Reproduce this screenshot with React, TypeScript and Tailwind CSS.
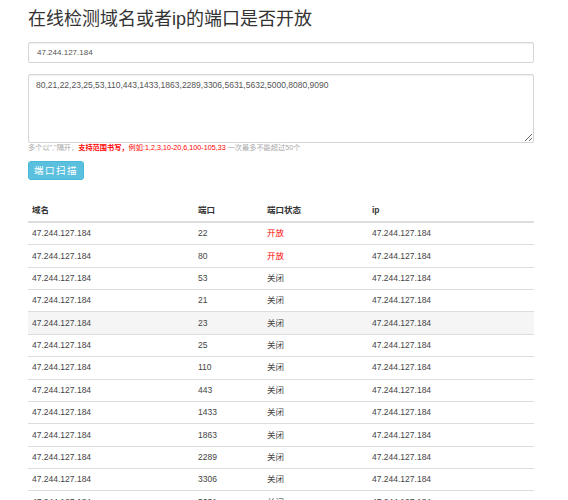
import React from "react";

const ports: { port: string; open: boolean }[] = [
  { port: "22", open: true },
  { port: "80", open: true },
  { port: "53", open: false },
  { port: "21", open: false },
  { port: "23", open: false },
  { port: "25", open: false },
  { port: "110", open: false },
  { port: "443", open: false },
  { port: "1433", open: false },
  { port: "1863", open: false },
  { port: "2289", open: false },
  { port: "3306", open: false },
  { port: "5631", open: false },
  { port: "5632", open: false },
  { port: "5000", open: false },
];

const font = { fontFamily: '"Liberation Sans", Arial, "Noto Sans CJK SC", sans-serif' };

export default function App() {
  return (
    <div className="min-h-[500px] bg-white text-[#333]" style={font}>
      <div className="w-[506px] ml-[28px]">
        <h1 className="pt-[9px] text-[18px] leading-[20px] font-normal text-[#333] whitespace-nowrap">
          在线检测域名或者ip的端口是否开放
        </h1>
        <input
          className="mt-[13px] block w-full h-[21px] border border-[#d6d6d6] rounded-[2px] px-[8px] text-[8px] text-[#555] outline-none shadow-[inset_0_1px_1px_rgba(0,0,0,0.06)]"
          defaultValue="47.244.127.184"
          style={font}
        />
        <textarea
          className="mt-[11px] block w-full h-[69px] border border-[#d6d6d6] rounded-[2px] px-[7px] py-[4px] text-[8.5px] leading-[12px] text-[#555] outline-none shadow-[inset_0_1px_1px_rgba(0,0,0,0.06)] resize-y"
          defaultValue="80,21,22,23,25,53,110,443,1433,1863,2289,3306,5631,5632,5000,8080,9090"
          style={font}
        />
        <p className="h-[10px] text-[7.2px] leading-[10px] text-[#aaa] whitespace-nowrap">
          多个以","隔开，
          <span className="text-[#f00] font-bold">支持范围书写，</span>
          <span className="text-[#f00]">例如:1,2,3,10-20,6,100-105,33</span> 一次最多不能超过50个
        </p>
        <button
          className="mt-[8px] block w-[56px] h-[19px] rounded-[3px] bg-[#5bc0de] border border-[#46b8da] text-white text-[9.5px] tracking-[1.5px] leading-[17px] text-center"
          style={font}
        >
          端口扫描
        </button>
        <div className="mt-[19px] text-[8.5px]">
          <div className="flex h-[24px] items-center border-b-2 border-[#ddd] font-bold text-[#333]">
            <div className="w-[166px] pl-[4px]">域名</div>
            <div className="w-[69px] pl-[4px]">端口</div>
            <div className="w-[105px] pl-[4px]">端口状态</div>
            <div className="flex-1 pl-[4px]">ip</div>
          </div>
          {ports.map((p, i) => (
            <div
              key={i}
              className={`flex items-center text-[#444] ${
                i === 0 ? "h-[21.36px]" : "h-[22.36px] border-t border-[#ddd]"
              } ${i === 4 ? "bg-[#f5f5f5]" : ""}`}
            >
              <div className="w-[166px] pl-[4px]">47.244.127.184</div>
              <div className="w-[69px] pl-[4px]">{p.port}</div>
              <div className={`w-[105px] pl-[4px] ${p.open ? "text-[#f00]" : ""}`}>
                {p.open ? "开放" : "关闭"}
              </div>
              <div className="flex-1 pl-[4px]">47.244.127.184</div>
            </div>
          ))}
        </div>
      </div>
    </div>
  );
}
